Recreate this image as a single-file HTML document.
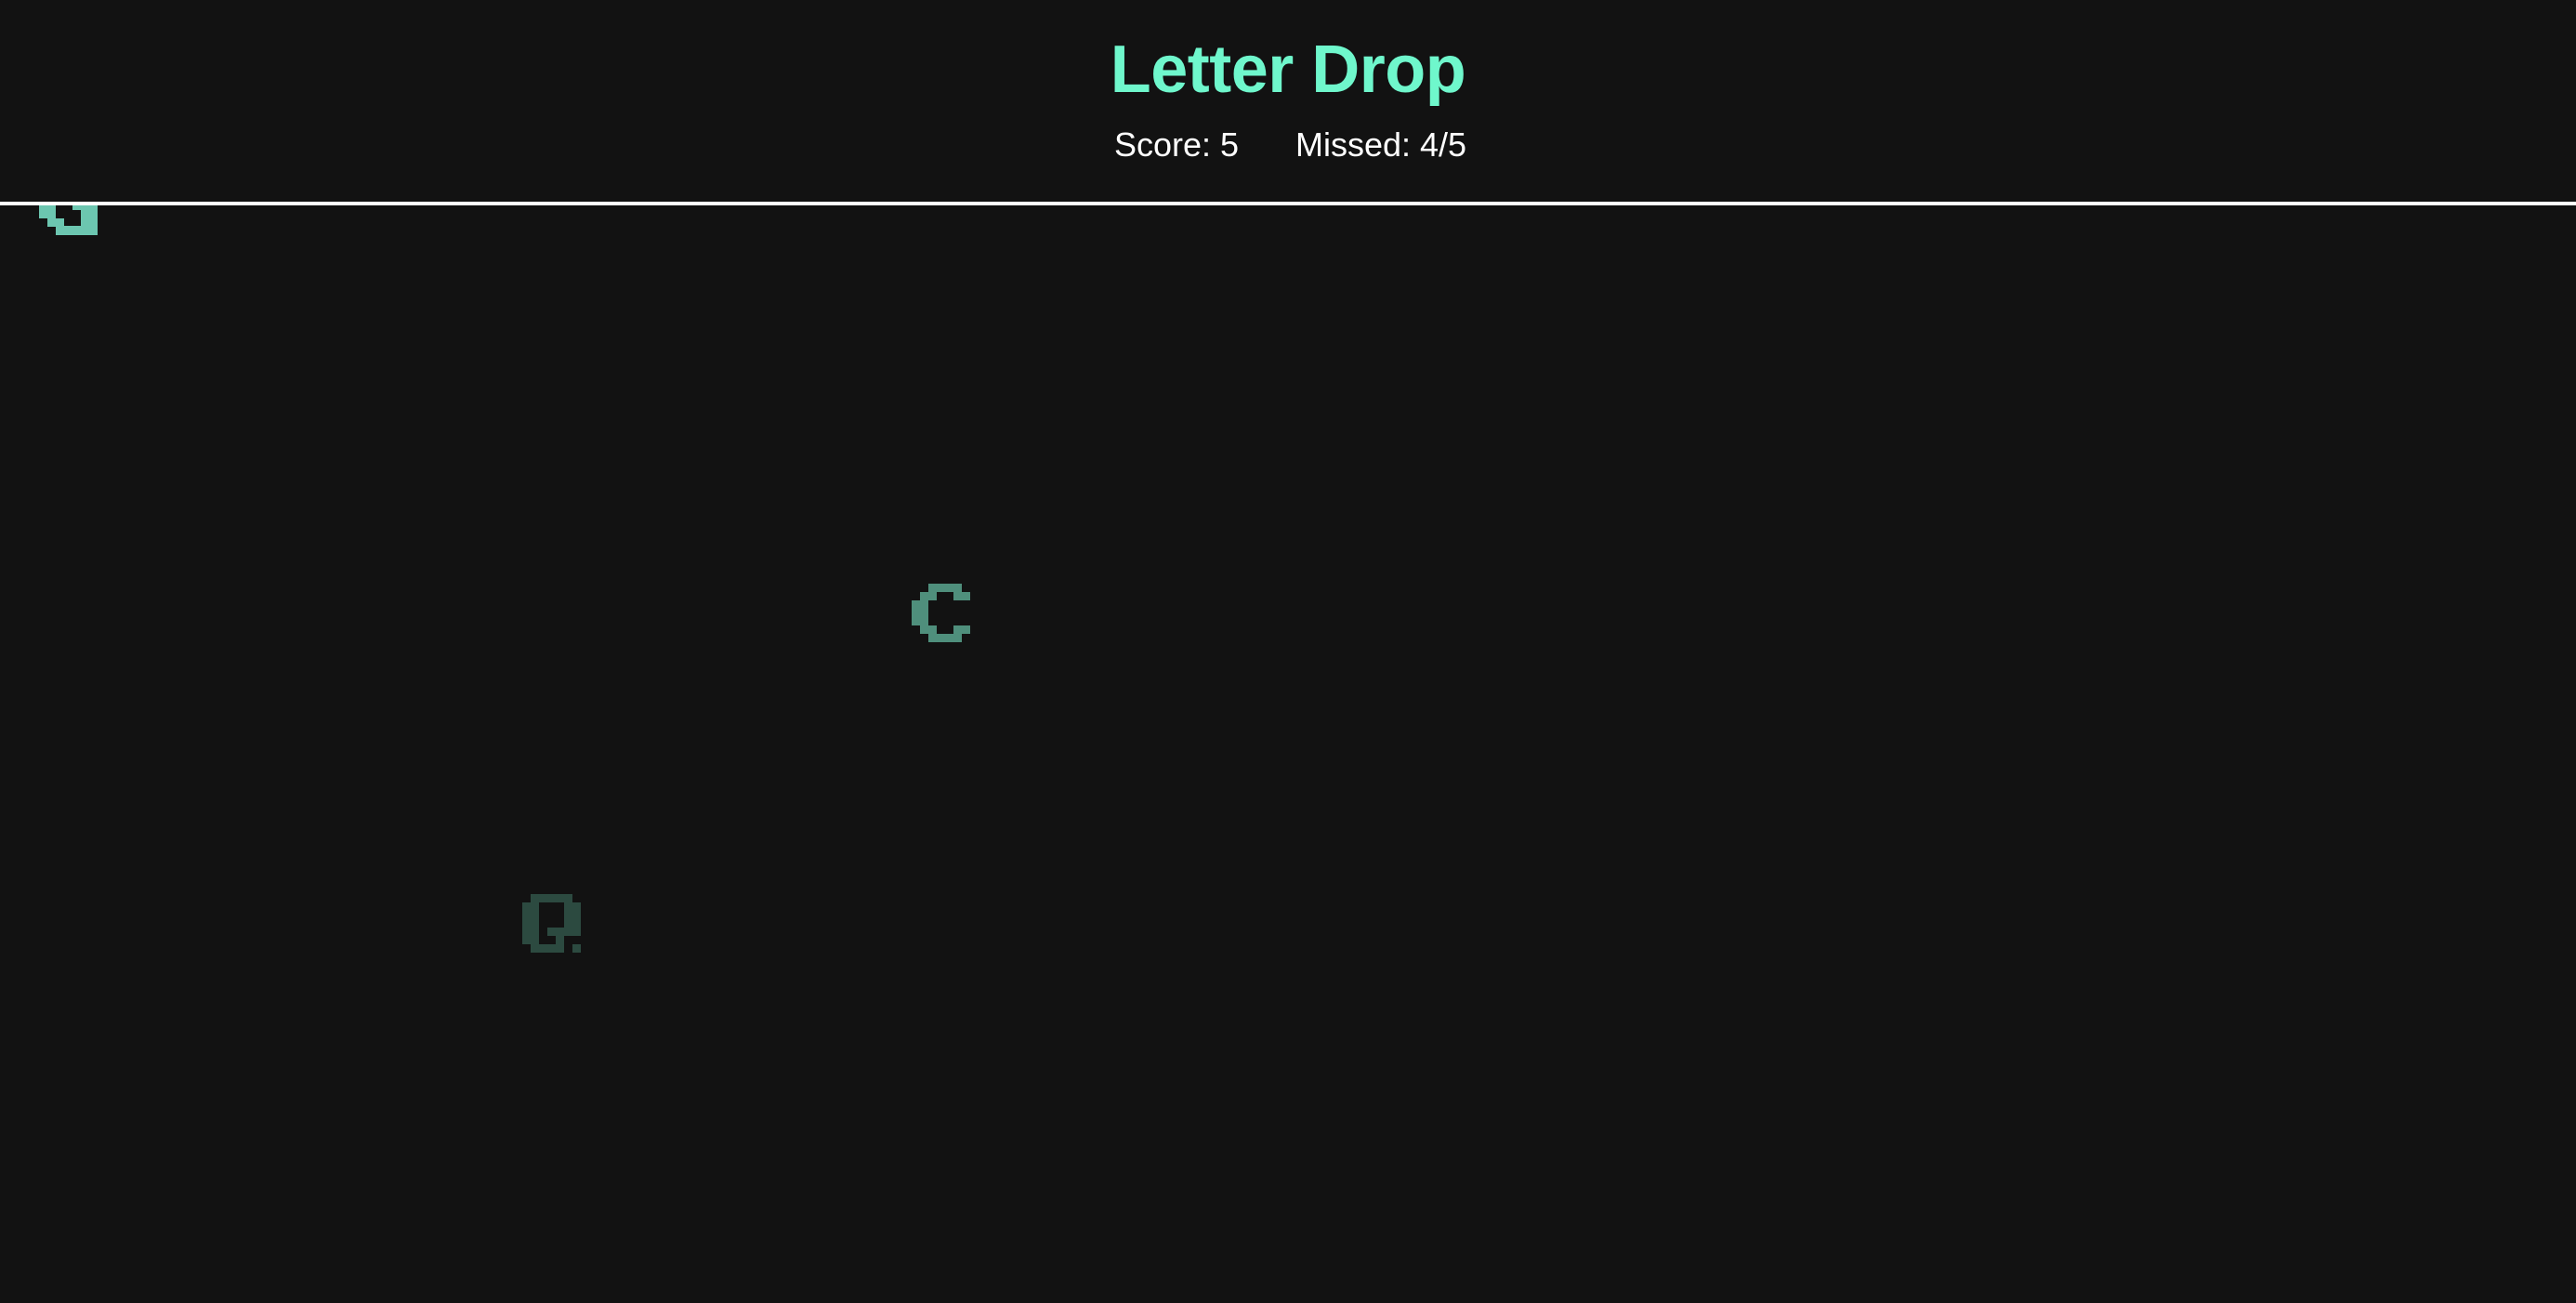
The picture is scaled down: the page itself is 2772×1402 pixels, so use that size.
<!DOCTYPE html>
<html><head><meta charset="utf-8"><style>
html,body{margin:0;padding:0;background:#121212;width:2772px;height:1402px;overflow:hidden;font-family:"Liberation Sans",Arial,sans-serif}
.t{position:absolute;left:0;width:2772px;text-align:center;color:#6ff7cc;font-weight:bold;font-size:72px;top:32px;line-height:86px;margin:0;letter-spacing:-0.5px}
.s{position:absolute;top:134px;font-size:36px;color:#fff;line-height:44px}
.line{position:absolute;left:0;top:217px;width:2772px;height:4px;background:#fff}
svg{position:absolute;left:0;top:0}
</style></head><body>
<h1 class="t">Letter Drop</h1>
<div class="s" style="left:1199px">Score: 5</div>
<div class="s" style="left:1394px">Missed: 4/5</div>
<div class="line"></div>
<svg width="2772" height="1402">
<g fill="#6cc6b0">
<rect x="42" y="221" width="18" height="14"/>
<rect x="51" y="235" width="18" height="9"/>
<rect x="60" y="243" width="45" height="10"/>
<rect x="87" y="221" width="18" height="24"/>
<rect x="78" y="221" width="9" height="5"/>
</g>
<g fill="#4f8f7c">
<rect x="999" y="628" width="36" height="9"/>
<rect x="990" y="637" width="18" height="9"/>
<rect x="1026" y="637" width="18" height="9"/>
<rect x="981" y="646" width="18" height="27"/>
<rect x="990" y="673" width="18" height="9"/>
<rect x="1026" y="673" width="18" height="9"/>
<rect x="999" y="682" width="36" height="9"/>
</g>
<g fill="#2c4a40">
<rect x="571" y="962" width="45" height="9"/>
<rect x="562" y="971" width="18" height="45"/>
<rect x="571" y="1016" width="36" height="9"/>
<rect x="607" y="971" width="18" height="36"/>
<rect x="589" y="998" width="27" height="9"/>
<rect x="598" y="1007" width="9" height="9"/>
<rect x="616" y="1016" width="9" height="9"/>
</g>
</svg>
</body></html>
